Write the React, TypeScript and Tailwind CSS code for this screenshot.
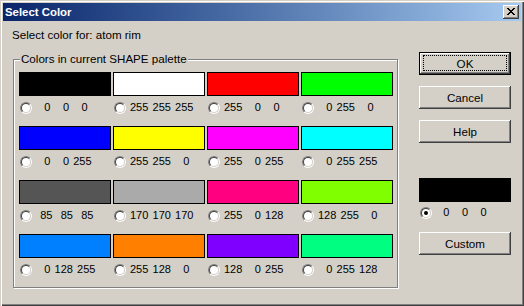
import React from "react";

type Rgb = [number, number, number];

const palette: Rgb[] = [
  [0, 0, 0],
  [255, 255, 255],
  [255, 0, 0],
  [0, 255, 0],
  [0, 0, 255],
  [255, 255, 0],
  [255, 0, 255],
  [0, 255, 255],
  [85, 85, 85],
  [170, 170, 170],
  [255, 0, 128],
  [128, 255, 0],
  [0, 128, 255],
  [255, 128, 0],
  [128, 0, 255],
  [0, 255, 128],
];

const pad = (n: number) => String(n).padStart(3, " ");
const label = (c: Rgb) => `${pad(c[0])} ${pad(c[1])} ${pad(c[2])}`;

const Radio: React.FC<{ checked?: boolean }> = ({ checked }) => (
  <span className="flex h-[12px] w-[12px] shrink-0 items-center justify-center rounded-full border border-t-[#808080] border-l-[#808080] border-r-white border-b-white">
    <span className="flex h-[10px] w-[10px] items-center justify-center rounded-full border border-t-[#404040] border-l-[#404040] border-r-[#d4d0c8] border-b-[#d4d0c8] bg-white">
      {checked && <span className="h-[4px] w-[4px] rounded-full bg-black" />}
    </span>
  </span>
);

const Button: React.FC<{ text: string; isDefault?: boolean; className?: string }> = ({
  text,
  isDefault,
  className,
}) => (
  <button
    className={`relative flex h-[23px] w-[92px] items-center justify-center bg-[#d4d0c8] text-[11.6px] leading-[13px] text-black ${
      isDefault
        ? "border border-black shadow-[inset_-1px_-1px_0_#404040,inset_1px_1px_0_#fff,inset_-2px_-2px_0_#808080]"
        : "shadow-[inset_-1px_-1px_0_#404040,inset_1px_1px_0_#fff,inset_-2px_-2px_0_#808080]"
    } ${className ?? ""}`}
  >
    {isDefault && (
      <span className="absolute top-[2px] right-[3px] bottom-[3px] left-[3px] border border-dotted border-black" />
    )}
    <span className="pb-[1px]">{text}</span>
  </button>
);

const App: React.FC = () => {
  return (
    <div className="flex h-[306px] w-[524px] flex-col bg-[#d4d0c8] p-[3px] font-['Liberation_Sans',Arial,sans-serif] text-[11.6px] leading-[13px] text-black shadow-[inset_1px_1px_0_#d4d0c8,inset_2px_2px_0_#fff,inset_-1px_-1px_0_#404040,inset_-2px_-2px_0_#808080]">
      {/* title bar */}
      <div className="flex h-[18px] items-center justify-between bg-gradient-to-r from-[#0a246a] to-[#a6caf0] pl-[2px] pr-[2px]">
        <span className="text-[11.4px] font-bold leading-[13px] text-white">Select Color</span>
        <span className="flex h-[14px] w-[16px] items-center justify-center bg-[#d4d0c8] shadow-[inset_-1px_-1px_0_#404040,inset_1px_1px_0_#fff,inset_-2px_-2px_0_#808080]">
          <svg width="8" height="7" viewBox="0 0 8 7" className="mb-[1px]">
            <path d="M0 0h2v1h-2zM6 0h2v1h-2zM1 1h2v1h-2zM5 1h2v1h-2zM2 2h4v1h-4zM3 3h2v1h-2zM2 4h4v1h-4zM1 5h2v1h-2zM5 5h2v1h-2zM0 6h2v1h-2zM6 6h2v1h-2z" fill="#000" />
          </svg>
        </span>
      </div>

      <div className="flex flex-1 pl-[10px]">
        {/* left side */}
        <div className="flex flex-col">
          <div className="mt-[7px] ml-[-1px]">Select color for: atom rim</div>
          <div className="relative mt-[18px] h-[229px] w-[385px] border border-[#808080] pt-[12px] pl-[5px] shadow-[inset_1px_1px_0_#fff,1px_1px_0_#fff]">
            <span className="absolute top-[-8px] left-[6px] bg-[#d4d0c8] px-[1px]">
              Colors in current SHAPE palette
            </span>
            <div className="grid grid-cols-[repeat(4,92px)] gap-x-[2px] gap-y-[12px]">
              {palette.map((c, i) => (
                <div key={i} className="flex flex-col">
                  <div
                    className="h-[24px] border border-black"
                    style={{ backgroundColor: `rgb(${c[0]},${c[1]},${c[2]})` }}
                  />
                  <div className="mt-[5px] flex h-[13px] items-center">
                    <span className="ml-[1px]">
                      <Radio />
                    </span>
                    <span className="ml-[4px] whitespace-pre text-[11px] [word-spacing:1.1px]">{label(c)}</span>
                  </div>
                </div>
              ))}
            </div>
          </div>
        </div>

        {/* right side */}
        <div className="ml-[21px] flex flex-col">
          <Button text="OK" isDefault className="mt-[31px]" />
          <Button text="Cancel" className="mt-[11px]" />
          <Button text="Help" className="mt-[11px]" />
          <div className="mt-[35px] h-[24px] w-[92px] bg-black" />
          <div className="mt-[4px] flex h-[13px] items-center">
            <span className="ml-[1px]">
              <Radio checked />
            </span>
            <span className="ml-[3px] whitespace-pre text-[11px] [word-spacing:1.1px]">{label([0, 0, 0])}</span>
          </div>
          <Button text="Custom" className="mt-[13px]" />
        </div>
      </div>
    </div>
  );
};

export default App;
